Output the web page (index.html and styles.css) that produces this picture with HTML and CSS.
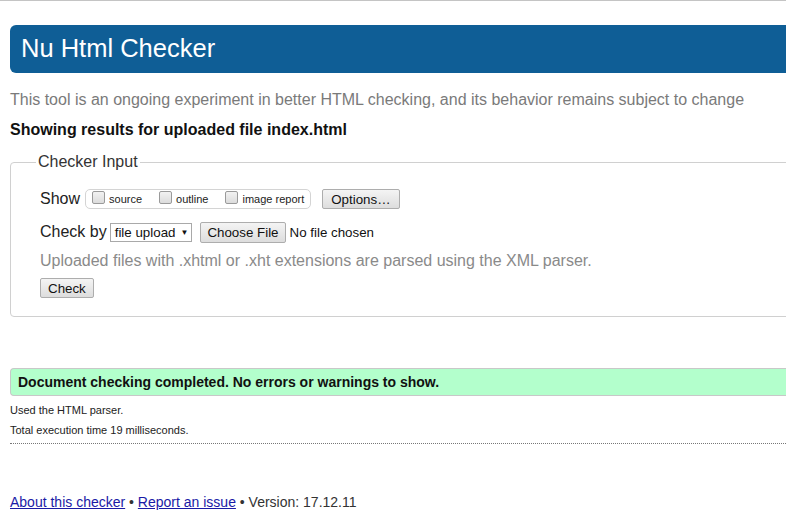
FILE: index.html
```html
<!DOCTYPE html>
<html lang="en">
<head>
<meta charset="utf-8">
<title>Nu Html Checker</title>
<link rel="stylesheet" href="styles.css">
</head>
<body>
<div class="page">
  <h1 class="title">Nu Html Checker</h1>
  <p class="intro">This tool is an ongoing experiment in better HTML checking, and its behavior remains subject to change</p>
  <p class="showing">Showing results for uploaded file index.html</p>
  <fieldset class="input">
    <legend>Checker Input</legend>
    <div class="row row-show">
      <span class="label">Show</span>
      <span class="group">
        <label class="opt"><span class="cb"></span>source</label>
        <label class="opt"><span class="cb"></span>outline</label>
        <label class="opt"><span class="cb"></span>image report</label>
      </span>
      <span class="btn btn-options">Options…</span>
    </div>
    <div class="row row-by">
      <span class="label">Check by</span>
      <span class="select">file upload <span class="arrow">▼</span></span>
      <span class="btn btn-file">Choose File</span>
      <span class="nofile">No file chosen</span>
    </div>
    <p class="help">Uploaded files with .xhtml or .xht extensions are parsed using the XML parser.</p>
    <div class="row row-check"><span class="btn">Check</span></div>
  </fieldset>
  <p class="success">Document checking completed. No errors or warnings to show.</p>
  <div class="details">
    <p>Used the HTML parser.</p>
    <p>Total execution time 19 milliseconds.</p>
  </div>
  <p class="footer"><a href="#">About this checker</a> • <a href="#">Report an issue</a> • Version: 17.12.11</p>
</div>
</body>
</html>
```
FILE: styles.css
```css
html {
  overflow: hidden;
  background: #fff;
}
body {
  margin: 0;
  border-top: 1px solid #c4c4c4;
  font-family: "Liberation Sans", Arial, sans-serif;
  color: #222;
}
.page {
  width: 1000px;
  padding: 24px 0 0 10px;
}
.title {
  margin: 0;
  height: 48px;
  box-sizing: border-box;
  padding: 7px 0 0 11px;
  background: #0f5e96;
  border-radius: 6px 0 0 6px;
  color: #fff;
  font-weight: normal;
  font-size: 25.5px;
  line-height: 32px;
}
.intro {
  margin: 17px 0 0;
  font-size: 16px;
  line-height: 20px;
  color: #7a7a7a;
}
.showing {
  margin: 10px 0 0;
  font-size: 16px;
  line-height: 20px;
  font-weight: bold;
  color: #111;
}
.input {
  margin: 12px 0 0;
  padding: 4px 0 18px 29px;
  border: 1px solid #d0d0d0;
  border-radius: 4px 0 0 4px;
  min-inline-size: 0;
}
.input legend {
  margin-left: -4px;
  padding: 0 2px;
  font-size: 16px;
  line-height: 20px;
  color: #333;
}
.row {
  display: flex;
  align-items: center;
}
.label {
  font-size: 16px;
  color: #222;
}
.row-show {
  height: 22px;
  margin-top: 12px;
}
.group {
  display: flex;
  align-items: center;
  margin-left: 5px;
  height: 18px;
  padding: 0 6px 0 6px;
  border: 1px solid #d4d4d4;
  border-radius: 5px;
  font-size: 11px;
  color: #222;
}
.opt {
  display: flex;
  align-items: center;
  margin-right: 17px;
}
.opt:last-child {
  margin-right: 0;
}
.cb {
  width: 11px;
  height: 11px;
  margin: -4px 4px 0 0;
  border: 1px solid #9a9a9a;
  border-radius: 2px;
  background: linear-gradient(#f2f2f2, #dcdcdc);
}
.btn {
  display: inline-flex;
  align-items: center;
  box-sizing: border-box;
  height: 20px;
  padding: 0 7px;
  border: 1px solid #adadad;
  border-radius: 2px;
  background: linear-gradient(#f4f4f4, #dddddd);
  font-size: 13.33px;
  color: #111;
}
.btn-options {
  margin-left: 11px;
  padding: 0 8px;
}
.row-by {
  height: 22px;
  margin-top: 11px;
}
.select {
  display: inline-flex;
  align-items: center;
  box-sizing: border-box;
  height: 19px;
  margin-left: 3px;
  padding: 0 3px 0 4px;
  border: 1px solid #a9a9a9;
  font-size: 13.33px;
  color: #111;
}
.arrow {
  font-size: 8px;
  margin-left: 5px;
}
.btn-file {
  margin-left: 8px;
  height: 21px;
  padding: 0 6px;
}
.nofile {
  margin-left: 4px;
  font-size: 13.33px;
  color: #111;
}
.help {
  margin: 8px 0 0;
  font-size: 16px;
  line-height: 20px;
  color: #8a8a8a;
}
.row-check {
  margin-top: 7px;
}
.success {
  margin: 51px 0 0;
  height: 28px;
  box-sizing: border-box;
  padding-left: 7px;
  border: 1px solid #c8c8c8;
  border-right: 0;
  border-radius: 4px 0 0 4px;
  background: #b3ffcc;
  font-size: 14px;
  font-weight: bold;
  line-height: 26px;
  color: #111;
}
.details {
  margin-top: 4px;
  padding-bottom: 3px;
  border-bottom: 1px dotted #777;
  font-size: 11px;
  color: #222;
}
.details p {
  margin: 0;
  line-height: 20px;
}
.footer {
  margin: 50px 0 0;
  font-size: 14px;
  color: #333;
}
.footer a {
  color: #1a1aa6;
}
```
